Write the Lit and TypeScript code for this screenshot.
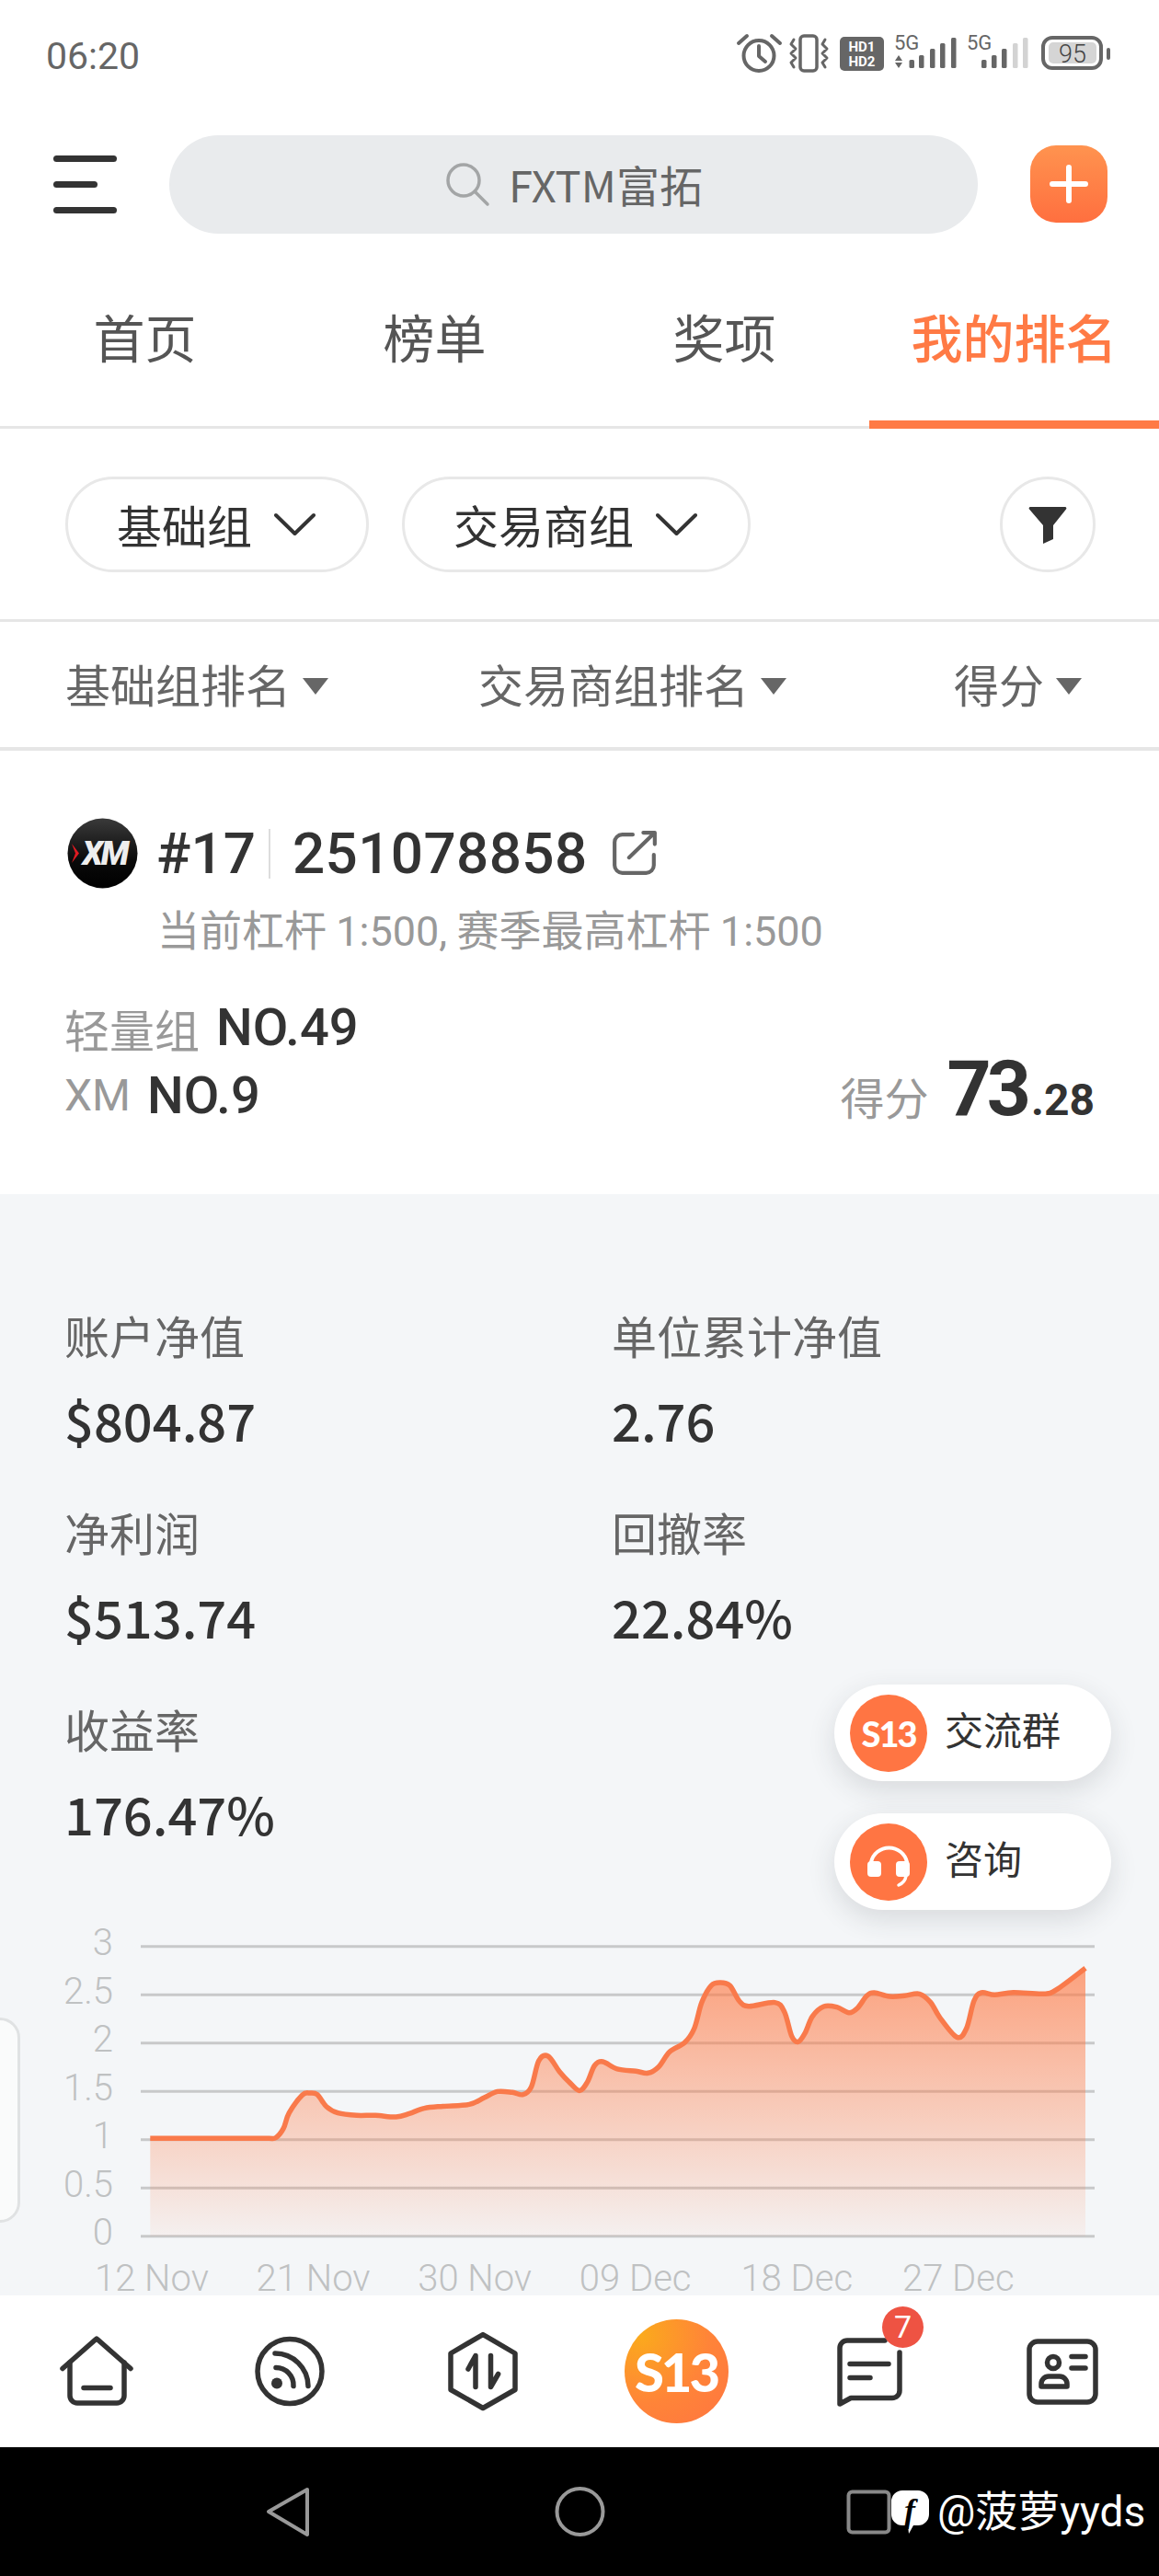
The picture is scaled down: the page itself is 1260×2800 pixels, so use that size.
import { LitElement, html, css, svg } from 'lit';
import { customElement } from 'lit/decorators.js';

// chart curve, x in page px, y measured from the top of the chart box
const CURVE: [number, number][] = ([
  [163.3, 247.3], [270, 247.3], [292, 247.3], [300, 246.5], [308.2, 236.2], [314.3, 219.3], [328.6, 199.7], [336.7, 197.4], [344.9, 199.1],
  [355.1, 212.6], [367.3, 219.3], [387.8, 222], [408.2, 222], [430.6, 223.7], [444.9, 220], [461.2, 214.2],
  [481.6, 211.9], [510.2, 209.9], [526.5, 202.4], [540.8, 195.7], [557.1, 196.7], [568.6, 199.1], [577.6, 190.6],
  [585.7, 161.9], [595.9, 156.9], [608.2, 173.8], [618.4, 184.9], [629.8, 194.7], [638.4, 185.6], [646.5, 167],
  [655.5, 163], [671, 171], [691.4, 173.4], [704.5, 175.4], [715.9, 168.7], [728.2, 151.8], [744.5, 141.7],
  [754.7, 126.5], [762.9, 97.8], [773.1, 79.3], [783.3, 75.9], [793.5, 79.3], [803.7, 96.2], [813.9, 101.9],
  [842.4, 97.8], [852.7, 108], [860.8, 135], [867.8, 141], [875.1, 131.6], [883.3, 113], [895.5, 102.2],
  [909.8, 102.9], [922.9, 109], [932.2, 103.9], [942.4, 90.4], [950.6, 87], [966.9, 91.1], [983.3, 90.4],
  [999.6, 88.4], [1011.8, 97.8], [1022, 114.7], [1040.4, 136], [1050.6, 126.5], [1058.8, 96.2], [1066.9, 87],
  [1081.2, 89.4], [1101.6, 86.7], [1134.3, 88.4], [1148.6, 83.7], [1180, 60],
] as [number, number][]).map(([x, y]) => [x, +(y * 0.988).toFixed(1)] as [number, number]);
const Y_TICKS = ['3', '2.5', '2', '1.5', '1', '0.5', '0'];
const X_TICKS = ['12 Nov', '21 Nov', '30 Nov', '09 Dec', '18 Dec', '27 Dec'];
const CHART_TOP = 35.7;
const CHART_STEP = 52.5;
const CHART_BASE = CHART_TOP + CHART_STEP * 6;

function smooth(pts: [number, number][]) {
  let d = `M${pts[0][0]} ${pts[0][1]}`;
  for (let i = 0; i < pts.length - 1; i++) {
    const p0 = pts[Math.max(i - 1, 0)];
    const p1 = pts[i];
    const p2 = pts[i + 1];
    const p3 = pts[Math.min(i + 2, pts.length - 1)];
    const c1x = p1[0] + (p2[0] - p0[0]) / 6;
    const c1y = p1[1] + (p2[1] - p0[1]) / 6;
    const c2x = p2[0] - (p3[0] - p1[0]) / 6;
    const c2y = p2[1] - (p3[1] - p1[1]) / 6;
    d += ` C${c1x.toFixed(1)} ${c1y.toFixed(1)} ${c2x.toFixed(1)} ${c2y.toFixed(1)} ${p2[0]} ${p2[1]}`;
  }
  return d;
}

const STATS = [
  ['账户净值', '$804.87'],
  ['单位累计净值', '2.76'],
  ['净利润', '$513.74'],
  ['回撤率', '22.84%'],
  ['收益率', '176.47%'],
];

@customElement('app-root')
export class AppRoot extends LitElement {
  static styles = css`
    :host {
      display: block;
      width: 1260px;
      height: 2800px;
      overflow: hidden;
      background: #fff;
      color: #333;
      font-family: 'Noto Sans CJK SC', 'Noto Sans', sans-serif;
    }
    .status { height: 130px; box-sizing: border-box; padding: 28px 40px 0 50px; display: flex; justify-content: space-between; }
    .time { font: 400 41px/66px Roboto, sans-serif; color: #666; }
    .status svg { display: block; width: 430px; height: 60px; }

    .header { height: 140px; display: flex; align-items: center; padding-left: 58px; }
    .menu { width: 69px; display: flex; flex-direction: column; gap: 21px; margin-right: 57px; }
    .menu i { display: block; height: 7px; border-radius: 4px; background: #333; }
    .menu i:nth-child(2) { width: 48px; }
    .search {
      width: 879px; height: 107px; border-radius: 54px; background: #e9ebed;
      display: flex; align-items: center; justify-content: center; gap: 20px;
      font-size: 47px; line-height: 60px; color: #666;
    }
    .search svg { width: 50px; height: 50px; }
    .plus {
      width: 84px; height: 84px; margin-left: 57px; border-radius: 28px;
      background: linear-gradient(180deg, #ff934f, #ff6f3f);
      display: flex; align-items: center; justify-content: center;
    }
    .plus svg { width: 44px; height: 44px; }

    .tabs { height: 196px; box-sizing: border-box; border-bottom: 3px solid #e6e6e6; display: grid; grid-template-columns: repeat(4, 315px); }
    .tab { display: flex; align-items: center; justify-content: center; font-size: 56px; color: #555; height: 196px; box-sizing: border-box; padding-top: 2px; border-bottom: 9px solid transparent; }
    .tab.active { color: #ff7a45; font-weight: 500; border-bottom-color: #ff7a45; }

    .filters { height: 210px; box-sizing: border-box; border-bottom: 3px solid #e6e6e6; display: flex; align-items: center; padding: 0 69px 0 71px; gap: 36px; }
    .pill {
      height: 104px; box-sizing: border-box; border: 3px solid #e8e8e8; border-radius: 52px;
      display: flex; align-items: center; padding: 0 55px 0 53px; gap: 24px; font-size: 49px; color: #333;
    }
    .pill svg { width: 45px; height: 26px; }
    .funnel { width: 104px; height: 104px; box-sizing: border-box; border: 3px solid #e8e8e8; border-radius: 50%; margin-left: auto; display: flex; align-items: center; justify-content: center; }
    .funnel svg { width: 44px; height: 44px; }

    .sort { height: 140px; box-sizing: border-box; border-bottom: 4px solid #e6e6e6; display: grid; grid-template-columns: 449px 517px auto; align-items: center; padding: 0 0 4px 71px; font-size: 49px; color: #666; }
    .sort span { display: flex; align-items: center; gap: 13px; }
    .sort i { display: block; width: 0; height: 0; border-left: 14px solid transparent; border-right: 14px solid transparent; border-top: 18px solid #666; margin-top: 8px; }

    .card { height: 482px; box-sizing: border-box; padding: 72px 70px 0 73px; }
    .title { display: flex; align-items: center; height: 79px; }
    .xm { width: 77px; height: 77px; display: block; }
    .rank { font: 500 62px/77px Roboto, sans-serif; margin-left: 20px; }
    .sep { width: 2px; height: 54px; background: #ddd; margin: 0 24px 0 14px; }
    .acct { font: 500 62px/77px Roboto, sans-serif; letter-spacing: 0.4px; }
    .ext { width: 52px; height: 52px; margin-left: 25px; }
    .sub { margin: 11px 0 0 98px; font-size: 46px; line-height: 60px; color: #999; white-space: nowrap; }
    .sub b { font: 400 45px/60px Roboto, sans-serif; }
    .bottom { display: flex; justify-content: space-between; align-items: flex-end; margin: 37px 0 0 -3px; }
    .ranks div { display: flex; align-items: center; height: 74px; gap: 18px; font-size: 49px; color: #999; }
    .ranks .no { font: 500 56px/74px Roboto, sans-serif; color: #333; }
    .ranks .xmn { font: 400 48px/74px Roboto, sans-serif; }
    .score { display: flex; align-items: baseline; font-size: 48px; color: #999; height: 73px; margin-bottom: 8px; }
    .score b { font: 700 84px/73px Roboto, sans-serif; letter-spacing: -5px; color: #333; margin-left: 20px; }
    .score em { font: 700 48px/73px Roboto, sans-serif; font-style: normal; color: #333; margin-left: 5px; }

    .stats { position: relative; height: 1197px; background: #f4f6f8; }
    .grid { display: grid; grid-template-columns: 595px 1fr; row-gap: 62px; padding: 123px 0 79px 70px; }
    .label { font-size: 49px; line-height: 60px; color: #666; }
    .value { font-size: 56px; font-weight: 500; line-height: 60px; margin-top: 32px; color: #333; }
    .chart { display: block; width: 1260px; height: 415px; overflow: visible; }
    .chart text { font: 300 40px Roboto, sans-serif; fill: #bfc1c2; }

    .drawer { position: absolute; left: -22px; top: 895px; width: 38px; height: 217px; border: 3px solid #e0e2e3; border-radius: 24px; background: #fafbfb; }
    .float {
      position: absolute; left: 907px; width: 301px; height: 105px; border-radius: 53px; background: #fff;
      box-shadow: 0 10px 30px rgba(40, 50, 60, 0.14);
      display: flex; align-items: center; gap: 19px; padding-left: 17px; box-sizing: border-box; font-size: 42px; color: #333;
    }
    .float.a { top: 533px; }
    .float.b { top: 673px; }
    .float .txt { margin-bottom: 10px; }
    .dot { width: 84px; height: 84px; border-radius: 50%; background: #ff7543; display: flex; align-items: center; justify-content: center; color: #fff; }
    .logo { font-family: Lato, Inter, sans-serif; font-weight: 900; letter-spacing: -2px; }
    .dot .logo { font-size: 38px; }
    .dot svg { width: 84px; height: 84px; }

    .nav { position: relative; height: 165px; background: #fff; display: grid; grid-template-columns: repeat(6, 210px); }
    .item { position: relative; display: flex; align-items: center; justify-content: center; }
    .item svg { width: 100px; height: 100px; }
    .s13 { width: 113px; height: 113px; border-radius: 50%; background: radial-gradient(circle at 15% 15%, #fbaa1c, #ff8438 55%, #ff7541); color: #fff; display: flex; align-items: center; justify-content: center; }
    .s13 .logo { font-size: 58px; letter-spacing: -3px; }
    .badge { position: absolute; left: 119px; top: 12px; width: 45px; height: 45px; border-radius: 50%; background: #ee5343; color: #fff; font: 400 34px/45px Roboto, sans-serif; text-align: center; }

    .sys { position: relative; height: 140px; background: #000; }
    .sys > svg { display: block; width: 1260px; height: 140px; }
    .mark { position: absolute; left: 969px; top: 44px; display: flex; align-items: center; gap: 9px; color: #fff; font: 400 46px/52px Roboto, 'Noto Sans CJK SC', sans-serif; white-space: nowrap; }
    .mark svg { width: 41px; height: 48px; }
    .mark text { font: italic 700 36px 'Liberation Serif', serif; fill: #000; }
  `;

  private statusIcons() {
    const tops = [65, 60, 53, 47, 41];
    const bars = (xs: number[], lightFrom: number) =>
      xs.map((x, i) => svg`<rect x=${x} y=${tops[i]} width="5.500" height=${74 - tops[i]} rx="1.500" fill=${i >= lightFrom ? '#d3d3d3' : '#666'}></rect>`);
    return html`<svg viewBox="790 28 430 60" aria-hidden="true">
      <g fill="none" stroke="#666" stroke-width="4" stroke-linecap="round" stroke-linejoin="round">
        <circle cx="825" cy="60.500" r="16.500"></circle>
        <path d="M825 50V61L832 67M803 47L812 39M839 39L848 47"></path>
      </g>
      <g fill="none" stroke="#666" stroke-width="3" stroke-linecap="round" stroke-linejoin="round">
        <rect x="870" y="39" width="18" height="38" rx="4" stroke-width="3.500"></rect>
        <path d="M863 43L860 48L865 53L860 58L865 63L860 68L863 73M897 43L894 48L899 53L894 58L899 63L894 68L897 73"></path>
      </g>
      <rect x="913" y="40" width="48" height="37" rx="5" fill="#666"></rect>
      <text x="937" y="56" text-anchor="middle" font-family="Roboto, sans-serif" font-weight="700" font-size="15" fill="#fff">HD1</text>
      <text x="937" y="72" text-anchor="middle" font-family="Roboto, sans-serif" font-weight="700" font-size="15" fill="#fff">HD2</text>
      <text x="972" y="54" font-family="Roboto, sans-serif" font-size="22" fill="#666">5G</text>
      <path d="M977 60L981 66H973ZM973 68H981L977 74Z" fill="#666"></path>
      ${bars([988.5, 999, 1011, 1022, 1034], 5)}
      <text x="1051" y="54" font-family="Roboto, sans-serif" font-size="22" fill="#666">5G</text>
      ${bars([1067, 1078, 1089, 1101, 1112], 3)}
      <rect x="1134" y="41" width="63" height="33" rx="10" fill="none" stroke="#666" stroke-width="4"></rect>
      <rect x="1140" y="46" width="52" height="23" rx="5" fill="#d5d5d5"></rect>
      <rect x="1203" y="52" width="4" height="13" rx="2" fill="#666"></rect>
      <text x="1166" y="68" text-anchor="middle" font-family="Roboto, sans-serif" font-weight="300" font-size="27" fill="#444">95</text>
    </svg>`;
  }

  private chart() {
    const line = smooth(CURVE);
    const area = `${line} L1180 ${CHART_BASE} L163.3 ${CHART_BASE} Z`;
    return html`<svg class="chart" viewBox="0 0 1260 415" aria-label="单位累计净值走势">
      <defs>
        <linearGradient id="fill" x1="0" y1="60" x2="0" y2=${CHART_BASE} gradientUnits="userSpaceOnUse">
          <stop offset="0" stop-color="#ff7a45" stop-opacity="0.68"></stop>
          <stop offset="1" stop-color="#ff7a45" stop-opacity="0.05"></stop>
        </linearGradient>
      </defs>
      ${Y_TICKS.map((t, i) => {
        const y = CHART_TOP + i * CHART_STEP;
        return svg`
          <line x1="153" x2="1190" y1=${y} y2=${y} stroke="#c8c9ca" stroke-width="3"></line>
          <text x="123" y=${y + 9.5} text-anchor="end">${t}</text>`;
      })}
      <path d=${area} fill="url(#fill)"></path>
      <path d=${line} fill="none" stroke="#f97a4b" stroke-width="5.500" stroke-linejoin="round"></path>
      ${X_TICKS.map((t, i) => svg`<text x=${103 + i * 175.6} y="410">${t}</text>`)}
    </svg>`;
  }

  render() {
    return html`
      <div class="status">
        <span class="time">06:20</span>
        ${this.statusIcons()}
      </div>

      <div class="header">
        <div class="menu"><i></i><i></i><i></i></div>
        <div class="search">
          <svg viewBox="0 0 50 50" fill="none" stroke="#a3a5a6" stroke-width="3.500" stroke-linecap="round">
            <circle cx="21" cy="21" r="17"></circle>
            <path d="M33 33L47 47"></path>
          </svg>
          <span>FXTM富拓</span>
        </div>
        <div class="plus">
          <svg viewBox="0 0 44 44" stroke="#fff" stroke-width="6" stroke-linecap="round"><path d="M22 4V40M4 22H40"></path></svg>
        </div>
      </div>

      <div class="tabs">
        <div class="tab">首页</div>
        <div class="tab">榜单</div>
        <div class="tab">奖项</div>
        <div class="tab active">我的排名</div>
      </div>

      <div class="filters">
        <div class="pill">基础组
          <svg viewBox="0 0 45 26" fill="none" stroke="#333" stroke-width="4" stroke-linecap="round" stroke-linejoin="round"><path d="M2 3L22.500 23L43 3"></path></svg>
        </div>
        <div class="pill">交易商组
          <svg viewBox="0 0 45 26" fill="none" stroke="#333" stroke-width="4" stroke-linecap="round" stroke-linejoin="round"><path d="M2 3L22.500 23L43 3"></path></svg>
        </div>
        <div class="funnel">
          <svg viewBox="0 0 44 44"><path d="M3 3H41a1.500 1.500 0 0 1 1 2.500L28 23V38L17 43V23L2 5.500A1.500 1.500 0 0 1 3 3Z" fill="#333"></path></svg>
        </div>
      </div>

      <div class="sort">
        <span>基础组排名<i></i></span>
        <span>交易商组排名<i></i></span>
        <span>得分<i></i></span>
      </div>

      <div class="card">
        <div class="title">
          <svg class="xm" viewBox="0 0 77 77">
            <defs>
              <linearGradient id="xmbg" x1="0" y1="0" x2="0" y2="1"><stop offset="0" stop-color="#3a3a3a"></stop><stop offset="0.6" stop-color="#0a0a0a"></stop><stop offset="1" stop-color="#000"></stop></linearGradient>
            </defs>
            <circle cx="38.500" cy="38.500" r="38" fill="url(#xmbg)"></circle>
            <path d="M5 28L13 38.500L5 49L9 38.500Z" fill="#e01b22"></path>
            <text x="41" y="51" text-anchor="middle" font-family="Roboto, sans-serif" font-style="italic" font-weight="900" font-size="36" letter-spacing="-2" fill="#eee">XM</text>
          </svg>
          <span class="rank">#17</span>
          <span class="sep"></span>
          <span class="acct">251078858</span>
          <svg class="ext" viewBox="0 0 50 50" fill="none" stroke="#666" stroke-width="4" stroke-linecap="round" stroke-linejoin="round">
            <path d="M23 5H12a8 8 0 0 0-8 8V37a8 8 0 0 0 8 8H37a8 8 0 0 0 8-8V26"></path>
            <path d="M19 29L46 3M34 3H46V15"></path>
          </svg>
        </div>
        <div class="sub">当前杠杆 <b>1:500,</b> 赛季最高杠杆 <b>1:500</b></div>
        <div class="bottom">
          <div class="ranks">
            <div>轻量组 <span class="no">NO.49</span></div>
            <div><span class="xmn">XM</span><span class="no">NO.9</span></div>
          </div>
          <div class="score">得分<b>73</b><em>.28</em></div>
        </div>
      </div>

      <div class="stats">
        <div class="grid">
          ${STATS.map(([k, v]) => html`<div><div class="label">${k}</div><div class="value">${v}</div></div>`)}
        </div>
        ${this.chart()}
        <div class="drawer"></div>
        <div class="float a"><span class="dot"><span class="logo">S13</span></span><span class="txt">交流群</span></div>
        <div class="float b">
          <span class="dot">
            <svg viewBox="0 0 84 84">
              <path d="M23 44V42a20 20 0 0 1 39 0V44" fill="none" stroke="#fff" stroke-width="4"></path>
              <rect x="19" y="41" width="15" height="17" rx="4" fill="#fff"></rect>
              <rect x="50" y="41" width="15" height="17" rx="4" fill="#fff"></rect>
              <path d="M61 57Q60 64 53 67" fill="none" stroke="#fff" stroke-width="3.500" stroke-linecap="round"></path>
            </svg>
          </span><span class="txt">咨询</span>
        </div>
      </div>

      <div class="nav">
        <div class="item">
          <svg viewBox="0 0 100 100" fill="none" stroke="#333" stroke-width="5.500" stroke-linecap="round" stroke-linejoin="round">
            <path d="M13 46.500L50 14L87 46.500" ></path>
            <path d="M21 40V76a8 8 0 0 0 8 8H72a8 8 0 0 0 8-8V40"></path>
            <path d="M36 67.500H65"></path>
          </svg>
        </div>
        <div class="item">
          <svg viewBox="0 0 100 100" fill="none" stroke="#333" stroke-width="5.500" stroke-linecap="round">
            <circle cx="50" cy="49.500" r="35"></circle>
            <circle cx="36" cy="62.500" r="6" fill="#333" stroke="none"></circle>
            <path d="M35 45.500A19 19 0 0 1 54 65.500"></path>
            <path d="M34 30A36 36 0 0 1 70 65.500"></path>
          </svg>
        </div>
        <div class="item">
          <svg viewBox="0 0 100 100" fill="none" stroke="#333" stroke-width="5.500" stroke-linecap="round" stroke-linejoin="round">
            <path d="M50 9.500L85 30V69.500L50 89.500L15 69.500V30Z"></path>
            <path d="M42 66.500V32.500L34 47M58.500 32.500V66.500L66.600 52.500"></path>
          </svg>
        </div>
        <div class="item"><span class="s13"><span class="logo">S13</span></span></div>
        <div class="item">
          <svg viewBox="0 0 100 100" fill="none" stroke="#333" stroke-width="5.500" stroke-linecap="round" stroke-linejoin="round">
            <path d="M67 16H26a8 8 0 0 0-8 8V85L30 78.500H75a8 8 0 0 0 8-8V29"></path>
            <path d="M29 41.500H71M29 56.500H51"></path>
          </svg>
          <span class="badge">7</span>
        </div>
        <div class="item">
          <svg viewBox="0 0 100 100" fill="none" stroke="#333" stroke-width="5.500" stroke-linecap="round" stroke-linejoin="round">
            <rect x="14" y="17" width="72" height="66" rx="9"></rect>
            <circle cx="40" cy="40" r="6.500"></circle>
            <path d="M27 66V63a8 8 0 0 1 8-8H47a8 8 0 0 1 8 8V66Z"></path>
            <path d="M60 33.500H75M60 46H75"></path>
          </svg>
        </div>
      </div>

      <div class="sys">
        <svg viewBox="0 0 1260 140" fill="none" stroke-linejoin="round">
          <path d="M334 46L292 70L334 95Z" stroke="#999" stroke-width="4"></path>
          <circle cx="630.500" cy="70" r="25" stroke="#999" stroke-width="4"></circle>
          <rect x="922.500" y="48.500" width="44" height="44" rx="4" stroke="#888" stroke-width="4"></rect>
        </svg>
        <div class="mark">
          <svg viewBox="0 0 41 48">
            <path d="M12 1H29A12 12 0 0 1 41 13V27A12 12 0 0 1 29 39H24L19 48L18 39H12A12 12 0 0 1 0 27V13A12 12 0 0 1 12 1Z" fill="#fff"></path>
            <text x="20" y="35" text-anchor="middle">f</text>
          </svg>
          <span>@菠萝yyds</span>
        </div>
      </div>
    `;
  }
}
